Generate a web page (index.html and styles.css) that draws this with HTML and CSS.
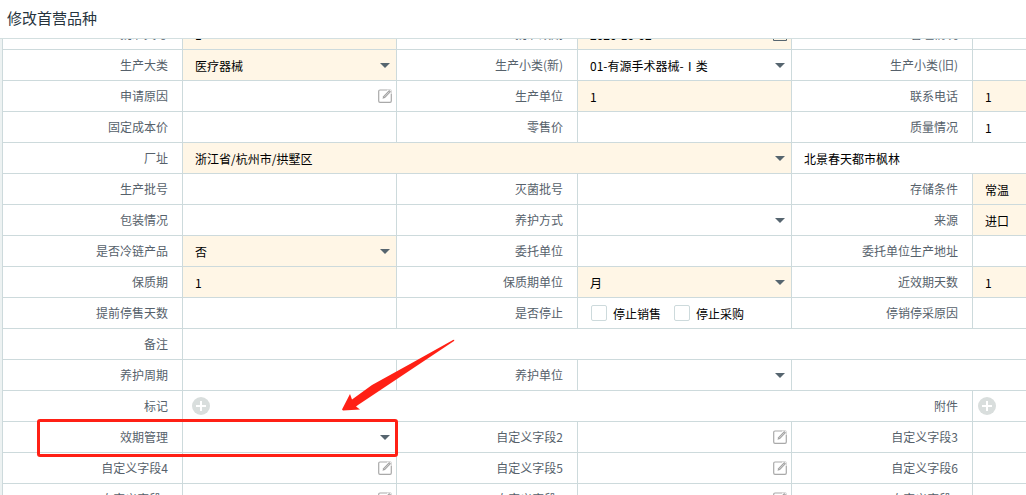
FILE: index.html
```
<!DOCTYPE html>
<html lang="zh-CN">

<head>
    <meta charset="utf-8">
    <title>修改首营品种</title>
    <link rel="stylesheet" href="styles.css">
</head>

<body>

    <!-- 图标 -->
    <svg class="sprite" aria-hidden="true">
        <symbol id="icon-edit" viewBox="0 0 14 14">
            <path d="M9 1H2Q.7 1 .7 2.200V12Q.7 13.300 2 13.300H12Q13.300 13.300 13.300 12V5" fill="none" stroke="#a9a9a9" stroke-width="1.200" />
            <path d="M9 .7H12.500Q13.300 .7 13.300 1.500V5" fill="none" stroke="#d3d3d3" />
            <path d="M4.500 9.800L5.200 7.300L11.200 1.100L13 2.800L7 9Z" fill="#a3a3a3" />
            <path d="M6.300 7.900L11.400 2.700" stroke="#e2e2e2" stroke-width=".7" />
        </symbol>
        <symbol id="icon-plus" viewBox="0 0 18 18">
            <circle cx="9" cy="9" r="9" fill="#d9dedd" />
            <path d="M9 4V14M4 9H14" stroke="#fff" stroke-width="2" />
        </symbol>
        <symbol id="icon-date" viewBox="0 0 14 14">
            <path d="M.5 3.500H13.500V13.500H.5ZM.5 6.500H13.500M4 1V4M10 1V4M3.500 9V12M6.500 9V12M9.500 9V12" fill="none" stroke="#56656f" />
        </symbol>
    </svg>

    <header class="title">
        <h1>修改首营品种</h1>
    </header>

    <main class="content">
        <form class="form">

            <label class="name" for="code">批准文号</label>
            <div class="field must"><input type="text" id="code" value="1"></div>
            <label class="name" for="date">批准效期</label>
            <div class="field must">
                <input type="text" id="date" value="2020-10-02">
                <button type="button" class="edit" aria-label="选择日期"><svg><use href="#icon-date" /></svg></button>
            </div>
            <label class="name" for="manage">管理情况</label>
            <div class="field"><input type="text" id="manage"></div>

            <label class="name" for="bigType">生产大类</label>
            <div class="field must drop"><select id="bigType"><option>医疗器械</option></select></div>
            <label class="name" for="newType">生产小类(新)</label>
            <div class="field drop"><select id="newType"><option>01-有源手术器械-Ⅰ类</option></select></div>
            <label class="name" for="oldType">生产小类(旧)</label>
            <div class="field"><input type="text" id="oldType"></div>

            <label class="name" for="reason">申请原因</label>
            <div class="field">
                <input type="text" id="reason">
                <button type="button" class="edit" aria-label="编辑"><svg><use href="#icon-edit" /></svg></button>
            </div>
            <label class="name" for="maker">生产单位</label>
            <div class="field must"><input type="text" id="maker" value="1"></div>
            <label class="name" for="phone">联系电话</label>
            <div class="field must"><input type="text" id="phone" value="1"></div>

            <label class="name" for="cost">固定成本价</label>
            <div class="field"><input type="text" id="cost"></div>
            <label class="name" for="price">零售价</label>
            <div class="field"><input type="text" id="price"></div>
            <label class="name" for="quality">质量情况</label>
            <div class="field"><input type="text" id="quality" value="1"></div>

            <!-- 厂址 -->
            <label class="name" for="area">厂址</label>
            <div class="field must drop span3"><select id="area"><option>浙江省/杭州市/拱墅区</option></select></div>
            <div class="field span2"><input type="text" aria-label="详细地址" value="北景春天都市枫林"></div>

            <label class="name" for="batch">生产批号</label>
            <div class="field"><input type="text" id="batch"></div>
            <label class="name" for="sterile">灭菌批号</label>
            <div class="field"><input type="text" id="sterile"></div>
            <label class="name" for="store">存储条件</label>
            <div class="field must drop"><select id="store"><option>常温</option></select></div>

            <label class="name" for="pack">包装情况</label>
            <div class="field"><input type="text" id="pack"></div>
            <label class="name" for="care">养护方式</label>
            <div class="field drop"><select id="care"><option></option></select></div>
            <label class="name" for="source">来源</label>
            <div class="field must drop"><select id="source"><option>进口</option></select></div>

            <label class="name" for="cold">是否冷链产品</label>
            <div class="field must drop"><select id="cold"><option>否</option></select></div>
            <label class="name" for="entrust">委托单位</label>
            <div class="field"><input type="text" id="entrust"></div>
            <label class="name" for="entrustAddr">委托单位生产地址</label>
            <div class="field"><input type="text" id="entrustAddr"></div>

            <label class="name" for="life">保质期</label>
            <div class="field must"><input type="text" id="life" value="1"></div>
            <label class="name" for="lifeUnit">保质期单位</label>
            <div class="field must drop"><select id="lifeUnit"><option>月</option></select></div>
            <label class="name" for="nearDays">近效期天数</label>
            <div class="field must"><input type="text" id="nearDays" value="1"></div>

            <label class="name" for="aheadDays">提前停售天数</label>
            <div class="field"><input type="text" id="aheadDays"></div>
            <span class="name">是否停止</span>
            <div class="field checks">
                <label><input type="checkbox">停止销售</label>
                <label><input type="checkbox">停止采购</label>
            </div>
            <label class="name" for="stopReason">停销停采原因</label>
            <div class="field"><input type="text" id="stopReason"></div>

            <label class="name" for="remark">备注</label>
            <div class="field span5"><input type="text" id="remark"></div>

            <label class="name" for="cycle">养护周期</label>
            <div class="field"><input type="text" id="cycle"></div>
            <label class="name" for="careUnit">养护单位</label>
            <div class="field drop"><select id="careUnit"><option></option></select></div>
            <div class="field span2"></div>

            <span class="name">标记</span>
            <div class="field tags span3">
                <button type="button" class="add" aria-label="添加标记"><svg><use href="#icon-plus" /></svg></button>
            </div>
            <span class="name">附件</span>
            <div class="field files">
                <button type="button" class="add" aria-label="添加附件"><svg><use href="#icon-plus" /></svg></button>
            </div>

            <!-- 自定义字段 -->
            <label class="name" for="expiry">效期管理</label>
            <div class="field drop">
                <select id="expiry"><option></option></select>
                <div class="mark"></div>
                <svg class="arrow" viewBox="0 0 114 74" aria-hidden="true">
                    <path d="M111 2Q113 1 112 3L70 31L16 67L14 68.500L18 71.500L1 72.500L0 71.500L8 56L10 61.500L30 47L68 26Z" fill="#ff2015" />
                </svg>
            </div>
            <label class="name" for="custom2">自定义字段2</label>
            <div class="field">
                <input type="text" id="custom2">
                <button type="button" class="edit" aria-label="编辑"><svg><use href="#icon-edit" /></svg></button>
            </div>
            <label class="name" for="custom3">自定义字段3</label>
            <div class="field"><input type="text" id="custom3"></div>

            <label class="name" for="custom4">自定义字段4</label>
            <div class="field">
                <input type="text" id="custom4">
                <button type="button" class="edit" aria-label="编辑"><svg><use href="#icon-edit" /></svg></button>
            </div>
            <label class="name" for="custom5">自定义字段5</label>
            <div class="field">
                <input type="text" id="custom5">
                <button type="button" class="edit" aria-label="编辑"><svg><use href="#icon-edit" /></svg></button>
            </div>
            <label class="name" for="custom6">自定义字段6</label>
            <div class="field"><input type="text" id="custom6"></div>

            <label class="name" for="custom7">自定义字段7</label>
            <div class="field">
                <input type="text" id="custom7">
                <button type="button" class="edit" aria-label="编辑"><svg><use href="#icon-edit" /></svg></button>
            </div>
            <label class="name" for="custom8">自定义字段8</label>
            <div class="field">
                <input type="text" id="custom8">
                <button type="button" class="edit" aria-label="编辑"><svg><use href="#icon-edit" /></svg></button>
            </div>
            <label class="name" for="custom9">自定义字段9</label>
            <div class="field"><input type="text" id="custom9"></div>

        </form>
    </main>

</body>

</html>
```
FILE: styles.css
```
* {
    box-sizing: border-box;
}

body {
    display: flex;
    flex-direction: column;
    height: 100vh;
    margin: 0;
    overflow: hidden;
    background-color: #fff;
    color: #000;
    font-family: "Noto Sans CJK SC", sans-serif;
    font-size: 12px;
}

input,
select,
button {
    margin: 0;
    padding: 0;
    border: 0;
    outline: 0;
    background: none;
    color: inherit;
    font: inherit;
}

.sprite {
    position: absolute;
    width: 0;
    height: 0;
}

.title {
    flex: none;
    padding: 0 7px 2px;
    border-bottom: 1px solid #d3dfe0;
}

.title h1 {
    margin: 0;
    color: #27343e;
    font-size: 15px;
    font-weight: normal;
    line-height: 36px;
}

.content {
    flex: 1;
    overflow: hidden;
    padding-left: 2px;
    background-color: #edf2f2;
}

/* 表单已向下滚动 20px */
.form {
    display: grid;
    grid-template-columns: 180px minmax(214px, 1fr) 181px minmax(214px, 1fr) 181px minmax(214px, 1fr);
    grid-auto-rows: 31px;
    min-width: 1185px;
    margin-top: -20px;
    border-left: 1px solid #cddadc;
    background-color: #fff;
}

.name,
.field {
    border-right: 1px solid #cddadc;
    border-bottom: 1px solid #cddadc;
}

.name {
    padding-right: 14px;
    color: #56616b;
    line-height: 30px;
    text-align: right;
}

.field {
    display: flex;
    align-items: center;
    position: relative;
}

.field > input,
.field > select {
    flex: 1;
    min-width: 0;
    height: 30px;
    padding: 0 12px;
    appearance: none;
}

.must {
    background-color: #fff6e6;
}

.span2 {
    grid-column: span 2;
}

.span3 {
    grid-column: span 3;
}

.span5 {
    grid-column: span 5;
}

/* 下拉箭头 */
.drop::after {
    content: "";
    position: absolute;
    top: 13px;
    right: 6px;
    border: 5px solid transparent;
    border-top-color: #56656f;
    border-bottom: 0;
    pointer-events: none;
}

.edit {
    flex: none;
    width: 14px;
    height: 14px;
    margin-right: 4px;
}

.add {
    width: 18px;
    height: 18px;
}

.edit svg,
.add svg {
    display: block;
    width: 100%;
    height: 100%;
}

.tags {
    padding-left: 9px;
    border-right: 0;
}

.files {
    padding-left: 5px;
}

.checks {
    gap: 13px;
    padding-left: 13px;
}

.checks label {
    display: flex;
    align-items: center;
    gap: 6px;
}

.checks input {
    width: 16px;
    height: 16px;
    border: 1px solid #cddadc;
    border-radius: 2px;
    appearance: none;
}

/* 标注 */
.mark {
    position: absolute;
    top: -3px;
    right: -2px;
    bottom: -5px;
    left: -146px;
    z-index: 1;
    border: 3px solid #ff2015;
    border-radius: 3px;
    pointer-events: none;
}

.arrow {
    position: absolute;
    right: -60px;
    bottom: 40px;
    z-index: 1;
    width: 114px;
    height: 74px;
    pointer-events: none;
}
```
